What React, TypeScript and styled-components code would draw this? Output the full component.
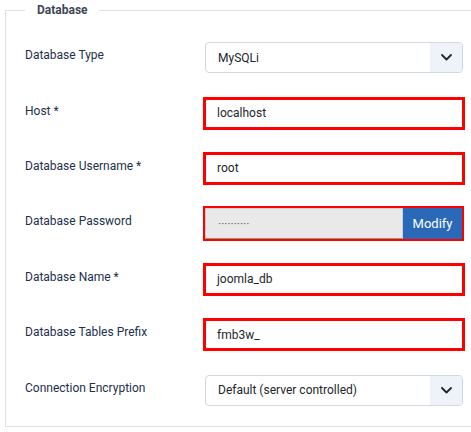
import React from "react";
import styled, { createGlobalStyle } from "styled-components";

const Global = createGlobalStyle`
  html, body {
    margin: 0;
    padding: 0;
    background: #ffffff;
    overflow: hidden;
  }
  body {
    font-family: Roboto, "Liberation Sans", Arial, sans-serif;
    -webkit-font-smoothing: antialiased;
  }
`;

const Fieldset = styled.fieldset`
  box-sizing: border-box;
  margin: 0 0 0 5px;
  width: 466px;
  padding: 10px 0 8px 19px;
  border: 1px solid #dbe1ea;
  border-right: none;
  min-width: 0;
`;

const Legend = styled.legend`
  padding: 0 11px 0 12px;
  font-size: 12px;
  font-weight: 700;
  line-height: 20px;
  color: #3c4856;
`;

const Rows = styled.div`
  display: grid;
  grid-auto-rows: 55.4px;
`;

const Row = styled.div`
  display: grid;
  grid-template-columns: 180px 258px;
  align-items: center;
`;

const Label = styled.div`
  font-size: 12px;
  line-height: 16px;
  color: #22304a;
  padding-bottom: 5px;
`;

const SelectBox = styled.div`
  box-sizing: border-box;
  height: 31px;
  display: flex;
  border: 1px solid #cfd7e3;
  border-radius: 4px;
  overflow: hidden;
  background: #ffffff;
`;

const SelectValue = styled.div`
  flex: 1;
  display: flex;
  align-items: center;
  padding-left: 12px;
  font-size: 12px;
  color: #22262a;
`;

const Chevron = styled.div`
  width: 32px;
  display: flex;
  align-items: center;
  justify-content: center;
  background: #eef2f9;
`;

const RedInput = styled.div`
  box-sizing: border-box;
  margin-left: -2px;
  width: 262px;
  height: 33px;
  border: 3px solid #ff0000;
  display: flex;
  align-items: center;
  padding-left: 11px;
  font-size: 12px;
  color: #22262a;
  background: #ffffff;
`;

const PasswordGroup = styled.div`
  box-sizing: border-box;
  margin-left: -2px;
  width: 261px;
  height: 35px;
  border: 2px solid #ff0000;
  display: flex;
`;

const PasswordField = styled.div`
  flex: 1;
  display: flex;
  align-items: center;
  padding-left: 12px;
  background: #e9e9e9;
  border: 1px solid #cfcfcf;
  border-bottom-color: #8a9c70;
  font-size: 12px;
  color: #666;
`;

const ModifyButton = styled.div`
  width: 59px;
  display: flex;
  align-items: center;
  justify-content: center;
  background: #2a69b8;
  color: #ffffff;
  font-size: 13px;
  font-weight: 400;
`;

const ChevronIcon = () => (
  <svg width="11" height="7" viewBox="0 0 11 7" fill="none">
    <path d="M1 1l4.5 4.5L10 1" stroke="#22262a" strokeWidth="1.8" strokeLinecap="round" strokeLinejoin="round" />
  </svg>
);

const Select = ({ value }: { value: string }) => (
  <SelectBox>
    <SelectValue>{value}</SelectValue>
    <Chevron>
      <ChevronIcon />
    </Chevron>
  </SelectBox>
);

export default function App() {
  return (
    <>
      <Global />
      <Fieldset>
        <Legend>Database</Legend>
        <Rows>
          <Row>
            <Label>Database Type</Label>
            <Select value="MySQLi" />
          </Row>
          <Row>
            <Label>Host *</Label>
            <RedInput>localhost</RedInput>
          </Row>
          <Row>
            <Label>Database Username *</Label>
            <RedInput>root</RedInput>
          </Row>
          <Row>
            <Label>Database Password</Label>
            <PasswordGroup>
              <PasswordField>··········</PasswordField>
              <ModifyButton>Modify</ModifyButton>
            </PasswordGroup>
          </Row>
          <Row>
            <Label>Database Name *</Label>
            <RedInput>joomla_db</RedInput>
          </Row>
          <Row>
            <Label>Database Tables Prefix</Label>
            <RedInput>fmb3w_</RedInput>
          </Row>
          <Row>
            <Label>Connection Encryption</Label>
            <Select value="Default (server controlled)" />
          </Row>
        </Rows>
      </Fieldset>
    </>
  );
}
